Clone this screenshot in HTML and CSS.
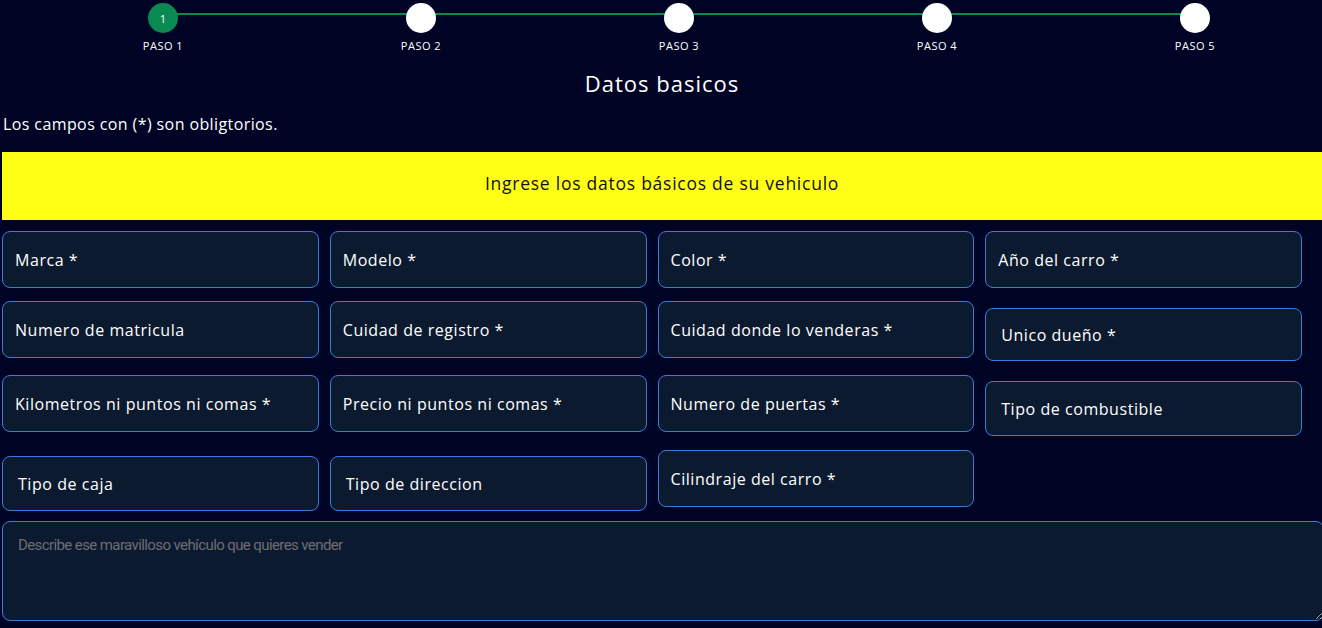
FILE: index.html
```html
<!DOCTYPE html>
<html lang="es">
<head>
<meta charset="utf-8">
<title>Datos basicos</title>
<link rel="stylesheet" href="styles.css">
</head>
<body>
<div class="page">
  <ol class="stepper">
    <li class="step done"><span class="dot">1</span><span class="label">PASO 1</span></li>
    <li class="step"><span class="dot"></span><span class="label">PASO 2</span></li>
    <li class="step"><span class="dot"></span><span class="label">PASO 3</span></li>
    <li class="step"><span class="dot"></span><span class="label">PASO 4</span></li>
    <li class="step last"><span class="dot"></span><span class="label">PASO 5</span></li>
  </ol>

  <h1 class="title">Datos basicos</h1>
  <p class="note">Los campos con (*) son obligtorios.</p>

  <div class="banner">Ingrese los datos básicos de su vehiculo</div>

  <div class="fields">
    <input class="field" placeholder="Marca *">
    <input class="field" placeholder="Modelo *">
    <input class="field" placeholder="Color *">
    <input class="field" placeholder="Año del carro *">

    <input class="field" placeholder="Numero de matricula">
    <input class="field" placeholder="Cuidad de registro *">
    <input class="field" placeholder="Cuidad donde lo venderas *">
    <input class="field field-alt r2" placeholder="Unico dueño *">

    <input class="field" placeholder="Kilometros ni puntos ni comas *">
    <input class="field" placeholder="Precio ni puntos ni comas *">
    <input class="field" placeholder="Numero de puertas *">
    <input class="field field-alt r3" placeholder="Tipo de combustible">

    <input class="field field-alt r4" placeholder="Tipo de caja">
    <input class="field field-alt r4" placeholder="Tipo de direccion">
    <input class="field" placeholder="Cilindraje del carro *">
  </div>

  <textarea class="description" placeholder="Describe ese maravilloso vehículo que quieres vender"></textarea>
</div>
</body>
</html>
```

FILE: styles.css
```css
* { box-sizing: border-box; }

html, body {
  margin: 0;
  background: #000424;
  color: #ffffff;
  font-family: "Open Sans", "DejaVu Sans", sans-serif;
  overflow: hidden;
}

.page {
  padding: 0 0 0 2px;
}

/* Stepper */
.stepper {
  list-style: none;
  margin: 0;
  padding: 3px 0 0 32px;
  display: flex;
}

.step {
  position: relative;
  width: 258px;
  flex: 0 0 258px;
  display: flex;
  flex-direction: column;
  align-items: center;
}

.step::after {
  content: "";
  position: absolute;
  left: 50%;
  width: 100%;
  top: 10px;
  height: 2px;
  background: #0a8a50;
}

.step.last::after { display: none; }

.dot {
  position: relative;
  z-index: 1;
  width: 30px;
  height: 30px;
  border-radius: 50%;
  background: #ffffff;
  color: #ffffff;
  font-size: 11px;
  display: flex;
  align-items: center;
  justify-content: center;
}

.step.done .dot { background: #0a8a50; }

.label {
  margin-top: 7px;
  font-size: 11px;
  letter-spacing: 0.5px;
  line-height: 12px;
}

/* Headings */
.title {
  margin: 16px 0 0;
  text-align: center;
  font-size: 22px;
  font-weight: 500;
  letter-spacing: 1px;
  line-height: 30px;
}

.note {
  margin: 16px 0 0 1px;
  font-size: 16px;
  letter-spacing: 0.4px;
  line-height: 20px;
}

.banner {
  margin-top: 18px;
  height: 68px;
  background: #ffff15;
  color: #111111;
  display: flex;
  align-items: center;
  justify-content: center;
  font-size: 17.5px;
  letter-spacing: 0.75px;
  padding-bottom: 6px;
}

/* Fields grid */
.fields {
  margin-top: 11px;
  width: 1300px;
  display: grid;
  grid-template-columns: repeat(4, 1fr);
  grid-template-rows: 57px 61px 62px 61px;
  column-gap: 11px;
  row-gap: 13px;
  align-items: start;
}

.field {
  height: 57px;
  width: 100%;
  border: 1px solid #3a7be0;
  border-radius: 8px;
  background: #0c1a30;
  color: #ffffff;
  padding: 0 12px;
  font-family: "Open Sans", "DejaVu Sans", sans-serif;
  font-size: 16px;
  letter-spacing: 0.55px;
  outline: none;
}

.field::placeholder { color: #ffffff; opacity: 1; }

.field-alt { padding: 0 15px; }
.field.r2 { margin-top: 7px; height: 53px; }
.field.r3 { margin-top: 6px; height: 55px; }
.field.r4 { margin-top: 6px; height: 55px; }

.description {
  display: block;
  margin-top: 10px;
  width: 1322px;
  height: 100px;
  border: 1px solid #3a7be0;
  border-radius: 8px;
  background: #0c1a30;
  color: #ffffff;
  padding: 14px 15px;
  font-family: Roboto, "Open Sans", sans-serif;
  font-size: 15px;
  letter-spacing: -0.6px;
  outline: none;
  resize: vertical;
}

.description::placeholder { color: #6e6e72; opacity: 1; }
```
